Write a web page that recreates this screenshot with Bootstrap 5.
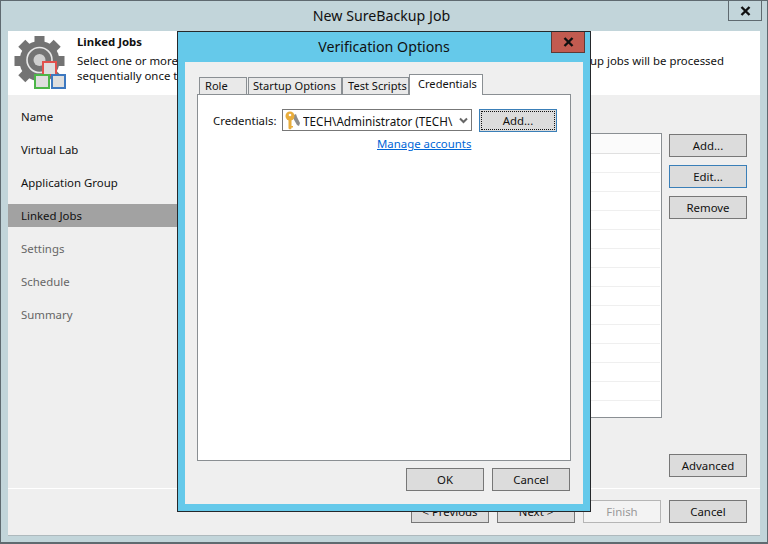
<!DOCTYPE html>
<html lang="en">
<head>
<meta charset="utf-8">
<title>New SureBackup Job</title>
<link href="https://cdn.jsdelivr.net/npm/bootstrap@5.3.0/dist/css/bootstrap.min.css" rel="stylesheet">
<style>
html,body{margin:0;width:768px;height:544px;overflow:hidden;background:#c2d5da}
body{font-family:"Noto Sans","Open Sans",sans-serif;font-size:11.4px;color:#111;position:relative;line-height:16px}
.shell{width:768px;height:544px;border:1px solid #5f6a70;border-bottom-width:2px;background:#c2d5da;padding:0 7px 6px 7px;display:flex;flex-direction:column}
.wintitle{height:30px;line-height:30px;text-align:center;font-size:14.2px;flex:none;padding-right:5px}
.winx{position:absolute;left:728px;top:1px;width:34px;height:20px;background:#c2d5da;border:1px solid #5f6a70;border-top:0;display:flex;align-items:center;justify-content:center}
.pane{flex:1;background:#efefef;border-bottom:1px solid #aeb9bd;display:flex;flex-direction:column;min-height:0}
.hdr{height:64px;background:#fff;flex:none;display:flex}
.hdr-ico{width:69px;flex:none;padding:4px 0 0 5px}
.hdr-title{font-weight:700;padding-top:3px;height:22px}
.hdr-text{height:15px;width:647px;display:flex;justify-content:space-between}
.mid{flex:1;display:flex;min-height:0}
.wiz{width:169px;flex:none;padding-top:5px}
.wiz-i{height:33px;padding:0 13px;display:flex;align-items:center}
.wiz-i.on{background:#a2a2a2;height:23px;margin:5px 0}
.wiz-i.off{color:#666}
.area{flex:1;position:relative;display:flex;padding:38px 13px 0 0;justify-content:flex-end;gap:7px}
.lst{width:300px;height:285px;background:#fff;border:1px solid #8a8f93;border-left:0;flex:none;padding-right:1px}
.lst-r{height:19px;border-bottom:1px solid #efefef}
.lst-r.fst{background:#fbfbfb;height:20px;border-bottom-color:#e0e0e0}
.side{width:78px;flex:none;display:flex;flex-direction:column;height:343px;margin-top:1px}
.wbtn{display:flex;align-items:center;justify-content:center;width:78px;height:23px;background:#dcdcdc;border:1px solid #777;color:#111;font-size:11.4px;padding:0;border-radius:0;line-height:1;flex:none}
.wbtn.focus{border-color:#3a7fb8}
.wbtn.dis{background:#f3f3f3;border-color:#b5b5b5;color:#999}
.foot{height:47px;border-top:1px solid #fff;flex:none;display:flex;justify-content:flex-end;gap:8px;padding:11px 13px 0 0}
.dlg{position:absolute;left:177px;top:31px;width:414px;height:481px;background:#65c9ea;border:1px solid #25282b;padding:0 7px 7px 7px;display:flex;flex-direction:column}
.dlg-title{height:30px;line-height:29px;text-align:center;font-size:14.2px;flex:none}
.dlg-x{position:absolute;right:5px;top:0;width:34px;height:21px;background:#c25b50;border:1px solid #5e3a36;border-top:0;display:flex;align-items:center;justify-content:center}
.dlg-body{flex:1;background:#efefef;padding:15px 12px 0 12px;display:flex;flex-direction:column;min-height:0}
.tabsrow{display:flex;height:17px;flex:none;align-items:flex-end;position:relative;z-index:1;padding-left:2px}
.tabx{height:17px;background:#e9e9e9;border:1px solid #8a8f93;border-bottom:0;padding:0 0 0 5px;line-height:16px;font-size:11.1px;white-space:nowrap;flex:none}
.tab-role{width:48px;margin-right:1px}
.tab-start{width:94px;padding-left:4px}
.tab-test{width:67px;padding-left:5px}
.tabx.tab-cred{width:74px;background:#fff;height:21px;margin-bottom:-1px;padding:1px 0 0 8px}
.tabpane{height:367px;background:#fff;border:1px solid #8a8f93;flex:none;position:relative;padding:14px 0 0 15px}
.frow{display:flex;align-items:flex-start;height:23px}
.flbl{width:69px;flex:none;line-height:23px}
.combo{width:190px;height:22px;border:1px solid #777;background:#fff;display:flex;align-items:center;padding-left:1px;overflow:hidden;flex:none;white-space:nowrap;position:relative}
.combo-t{width:155px;overflow:hidden;margin-left:1px;flex:none;font-size:11.7px;padding-top:1px}
.combo-c{position:absolute;right:3px;top:7px}
.addb{margin-left:7px;position:relative}
.addb::after{content:"";position:absolute;inset:1px;border:1px dotted #111}
.mng{display:block;margin:4px 0 0 164px;color:#0066d6;text-decoration:underline;width:94px;white-space:nowrap}
.dlg-btns{display:flex;justify-content:flex-end;gap:8px;padding:7px 0 0 0;margin-right:1px}
</style>
</head>
<body>
<div class="shell">
  <div class="wintitle">New SureBackup Job</div>
  <div class="pane">
    <div class="hdr">
      <div class="hdr-ico">
        <svg width="56" height="56" viewBox="0 0 56 56">
          <g fill="#737373" transform="translate(26.500 26)">
            <circle r="20"/>
            <rect x="-5" y="-25" width="10" height="9"/>
            <rect x="-5" y="-25" width="10" height="9" transform="rotate(45)"/>
            <rect x="-5" y="-25" width="10" height="9" transform="rotate(90)"/>
            <rect x="-5" y="-25" width="10" height="9" transform="rotate(135)"/>
            <rect x="-5" y="-25" width="10" height="9" transform="rotate(180)"/>
            <rect x="-5" y="-25" width="10" height="9" transform="rotate(225)"/>
            <rect x="-5" y="-25" width="10" height="9" transform="rotate(270)"/>
            <rect x="-5" y="-25" width="10" height="9" transform="rotate(315)"/>
            <circle r="12.500" fill="none" stroke="#e8e8e8" stroke-width="1.600" cy="-1"/>
            <circle r="6" fill="#cfcfcf" cy="-1"/>
          </g>
          <rect x="30" y="27" width="13" height="13" fill="#dedede" stroke="#e2514c" stroke-width="2"/>
          <rect x="22" y="40" width="14" height="13" fill="#dedede" stroke="#4cb648" stroke-width="2"/>
          <rect x="39" y="40" width="13" height="13" fill="#dedede" stroke="#3d78c0" stroke-width="2"/>
        </svg>
      </div>
      <div>
        <div class="hdr-title">Linked Jobs</div>
        <div class="hdr-text"><span>Select one or more</span><span>up jobs will be processed</span></div>
        <div class="hdr-text"><span>sequentially once t</span></div>
      </div>
    </div>
    <div class="mid">
      <div class="wiz">
        <div class="wiz-i">Name</div>
        <div class="wiz-i">Virtual Lab</div>
        <div class="wiz-i">Application Group</div>
        <div class="wiz-i on">Linked Jobs</div>
        <div class="wiz-i off">Settings</div>
        <div class="wiz-i off">Schedule</div>
        <div class="wiz-i off">Summary</div>
      </div>
      <div class="area">
        <div class="lst">
          <div class="lst-r fst"></div><div class="lst-r"></div><div class="lst-r"></div><div class="lst-r"></div><div class="lst-r"></div><div class="lst-r"></div><div class="lst-r"></div><div class="lst-r"></div><div class="lst-r"></div><div class="lst-r"></div><div class="lst-r"></div><div class="lst-r"></div><div class="lst-r"></div><div class="lst-r"></div>
        </div>
        <div class="side">
          <button class="wbtn" type="button">Add...</button>
          <button class="wbtn focus mt-2" type="button">Edit...</button>
          <button class="wbtn mt-2" type="button">Remove</button>
          <button class="wbtn mt-auto" type="button">Advanced</button>
        </div>
      </div>
    </div>
    <div class="foot">
      <button class="wbtn" type="button">&lt; Previous</button>
      <button class="wbtn" type="button">Next &gt;</button>
      <button class="wbtn dis" type="button">Finish</button>
      <button class="wbtn" type="button">Cancel</button>
    </div>
  </div>
</div>
<div class="winx"><svg width="11" height="10" viewBox="0 0 11 10"><path d="M1.500 1l8 8M9.500 1l-8 8" stroke="#111" stroke-width="2.400"/></svg></div>

<div class="dlg">
  <div class="dlg-title">Verification Options</div>
  <div class="dlg-x"><svg width="11" height="10" viewBox="0 0 11 10"><path d="M1.500 1l8 8M9.500 1l-8 8" stroke="#111" stroke-width="2.400"/></svg></div>
  <div class="dlg-body">
    <div class="tabsrow">
      <div class="tabx tab-role">Role</div>
      <div class="tabx tab-start">Startup Options</div>
      <div class="tabx tab-test">Test Scripts</div>
      <div class="tabx tab-cred">Credentials</div>
    </div>
    <div class="tabpane">
      <div class="frow">
        <div class="flbl">Credentials:</div>
        <div class="combo">
          <svg width="18" height="20" viewBox="0 0 18 20" class="flex-none">
            <path d="M10 5l2-1 1 3 3 6-1 3-2-1-4-7z" fill="#8d8d8d"/>
            <circle cx="6" cy="6" r="4.500" fill="#e9ad3c"/><circle cx="6" cy="5" r="1.300" fill="#fff"/>
            <path d="M4.500 9h3v7h1.500v1.500h-1.500v1l-1.500 1-1.500-1z" fill="#e9ad3c"/>
          </svg>
          <div class="combo-t">TECH\Administrator (TECH\</div>
          <svg class="combo-c" width="9" height="7" viewBox="0 0 9 7"><path d="M1 1.500l3.500 3.500 3.500-3.500" fill="none" stroke="#666" stroke-width="2"/></svg>
        </div>
        <button class="wbtn focus addb" type="button">Add...</button>
      </div>
      <a href="#" class="mng">Manage accounts</a>
    </div>
    <div class="dlg-btns">
      <button class="wbtn" type="button">OK</button>
      <button class="wbtn" type="button">Cancel</button>
    </div>
  </div>
</div>
</body>
</html>
